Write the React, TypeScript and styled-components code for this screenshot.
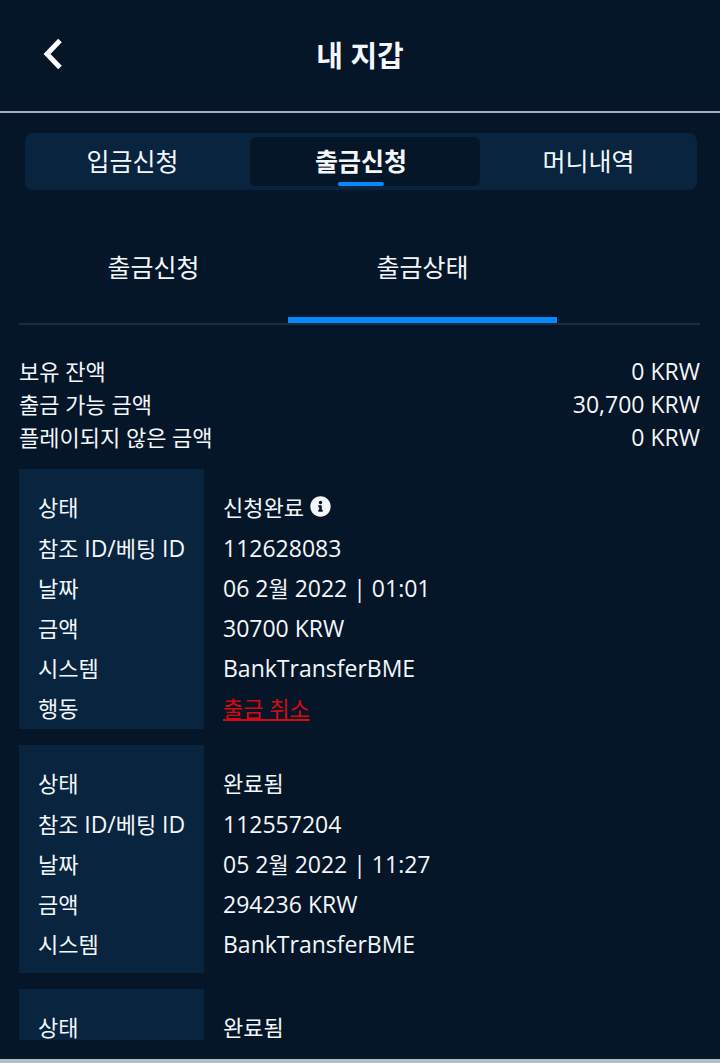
import React from "react";
import styled, { createGlobalStyle, css } from "styled-components";
import { FaInfoCircle } from "react-icons/fa";

const color = {
  page: "#051628",
  panel: "#08243f",
  text: "#f4f7fa",
  accent: "#0589ff",
  rule: "#1c2c3d",
  danger: "#d90810",
};

const GlobalStyle = createGlobalStyle`
  * { box-sizing: border-box; }
  body {
    margin: 0;
    background: ${color.page};
    color: ${color.text};
    font-family: "Open Sans", "Noto Sans CJK KR", sans-serif;
    font-size: 22px;
  }
  button { font: inherit; color: inherit; background: none; border: 0; padding: 0; cursor: pointer; }
`;

const Screen = styled.div`
  display: flex;
  flex-direction: column;
  height: 100vh;
`;

const Header = styled.header`
  display: grid;
  grid-template-columns: 60px 1fr 60px;
  align-items: center;
  height: 113px;
  padding: 0 24px;
  border-bottom: 2px solid #a9b1b8;
  flex: none;
`;

const BackButton = styled.button`
  display: flex;
  justify-content: center;
  padding: 0 2px 4px 0;
`;

const Title = styled.h1`
  margin: 0;
  text-align: center;
  font-size: 29px;
  line-height: 40px;
  font-weight: 700;
`;

const MainTabs = styled.nav`
  display: grid;
  grid-template-columns: 215fr 240fr 217fr;
  height: 57px;
  margin: 20px 23px 0 25px;
  border-radius: 8px;
  background: ${color.panel};
  flex: none;
`;

const MainTab = styled.button<{ $active?: boolean }>`
  padding-bottom: 2px;
  font-size: 25px;
  line-height: 36px;
  ${(p) =>
    p.$active &&
    css`
      display: flex;
      flex-direction: column;
      align-items: center;
      justify-content: flex-end;
      margin: 4px 0 4px 10px;
      padding: 0 8px 0 0;
      border-radius: 6px;
      background: ${color.page};
      font-weight: 700;
      &::after {
        content: "";
        width: 46px;
        height: 4px;
        margin-top: 3px;
        border-radius: 2px;
        background: ${color.accent};
      }
    `}
`;

const SubTabs = styled.nav`
  display: flex;
  height: 135px;
  margin: 0 20px 0 19px;
  border-bottom: 2px solid ${color.rule};
  flex: none;
`;

const SubTab = styled.button<{ $active?: boolean }>`
  flex: 0 0 269px;
  padding-top: 26px;
  font-size: 25px;
  line-height: 36px;
  border-bottom: 6px solid ${(p) => (p.$active ? color.accent : "transparent")};
`;

const Summary = styled.dl`
  margin: 30px 20px 15px 19px;
  flex: none;
`;

const SummaryRow = styled.div`
  display: flex;
  justify-content: space-between;
  line-height: 33px;
`;

const SummaryLabel = styled.dt``;

const Amount = styled.dd`
  margin: 0;
  font-size: 23px;
`;

const History = styled.main`
  flex: 1;
  min-height: 0;
  margin: 0 19px;
  overflow-y: auto;
  scrollbar-width: none;
`;

const Card = styled.dl`
  margin: 0 0 16px;
`;

const Label = styled.dt`
  flex: 0 0 185px;
  padding-left: 19px;
  background: ${color.panel};
  white-space: nowrap;
`;

const Value = styled.dd`
  display: flex;
  align-items: center;
  margin: 0 0 0 19px;
  height: 40px;
`;

const Row = styled.div`
  display: flex;
  line-height: 40px;
  &:first-child ${Label} {
    padding-top: 18px;
    padding-bottom: 1px;
  }
  &:first-child ${Value} {
    margin-top: 18px;
  }
  &:last-child ${Label} {
    padding-bottom: 1px;
  }
`;

const PlainEnd = styled.div`
  width: 185px;
  height: 9px;
  background: ${color.panel};
`;

const Latin = styled.span`
  font-size: 23px;
  white-space: pre;
`;

const Korean = styled.span`
  font-size: 22px;
`;

const InfoButton = styled.button`
  display: flex;
  margin: 0 0 2px 6px;
`;

const CancelLink = styled.a`
  color: ${color.danger};
  text-decoration: underline;
`;

const BottomEdge = styled.footer`
  height: 4px;
  margin-top: 19px;
  background: #b5bfca;
  flex: none;
`;

type Entry = {
  status: string;
  pending?: boolean;
  id?: string;
  date?: [string, string, string];
  amount?: string;
  system?: string;
};

const entries: Entry[] = [
  {
    status: "신청완료",
    pending: true,
    id: "112628083",
    date: ["06 2", "월", " 2022 | 01:01"],
    amount: "30700 KRW",
    system: "BankTransferBME",
  },
  {
    status: "완료됨",
    id: "112557204",
    date: ["05 2", "월", " 2022 | 11:27"],
    amount: "294236 KRW",
    system: "BankTransferBME",
  },
  { status: "완료됨" },
];

const balances = [
  ["보유 잔액", "0 KRW"],
  ["출금 가능 금액", "30,700 KRW"],
  ["플레이되지 않은 금액", "0 KRW"],
];

function HistoryCard({ entry }: { entry: Entry }) {
  return (
    <Card>
      <Row>
        <Label>상태</Label>
        <Value>
          {entry.status}
          {entry.pending && (
            <InfoButton type="button" aria-label="정보">
              <FaInfoCircle size={21} />
            </InfoButton>
          )}
        </Value>
      </Row>
      {entry.id && (
        <Row>
          <Label>
            참조 <Latin>ID/</Latin>베팅 <Latin>ID</Latin>
          </Label>
          <Value><Latin>{entry.id}</Latin></Value>
        </Row>
      )}
      {entry.date && (
        <Row>
          <Label>날짜</Label>
          <Value>
            <Latin>
              {entry.date[0]}
              <Korean>{entry.date[1]}</Korean>
              {entry.date[2]}
            </Latin>
          </Value>
        </Row>
      )}
      {entry.amount && (
        <Row>
          <Label>금액</Label>
          <Value><Latin>{entry.amount}</Latin></Value>
        </Row>
      )}
      {entry.system && (
        <Row>
          <Label>시스템</Label>
          <Value><Latin>{entry.system}</Latin></Value>
        </Row>
      )}
      {entry.pending ? (
        <Row>
          <Label>행동</Label>
          <Value><CancelLink href="#cancel">출금 취소</CancelLink></Value>
        </Row>
      ) : (
        <PlainEnd />
      )}
    </Card>
  );
}

export default function App() {
  return (
    <Screen>
      <GlobalStyle />
      <Header>
        <BackButton type="button" aria-label="뒤로">
          <svg width="20" height="32" viewBox="0 0 20 32" fill="none" stroke="#fff" strokeWidth="5">
            <path d="M17 2.5 4 16l13 13.5" />
          </svg>
        </BackButton>
        <Title>내 지갑</Title>
      </Header>
      <MainTabs>
        <MainTab type="button">입금신청</MainTab>
        <MainTab type="button" $active>출금신청</MainTab>
        <MainTab type="button">머니내역</MainTab>
      </MainTabs>
      <SubTabs>
        <SubTab type="button">출금신청</SubTab>
        <SubTab type="button" $active>출금상태</SubTab>
      </SubTabs>
      <Summary>
        {balances.map(([label, amount]) => (
          <SummaryRow key={label}>
            <SummaryLabel>{label}</SummaryLabel>
            <Amount>{amount}</Amount>
          </SummaryRow>
        ))}
      </Summary>
      <History>
        {entries.map((entry, i) => (
          <HistoryCard key={i} entry={entry} />
        ))}
      </History>
      <BottomEdge />
    </Screen>
  );
}
